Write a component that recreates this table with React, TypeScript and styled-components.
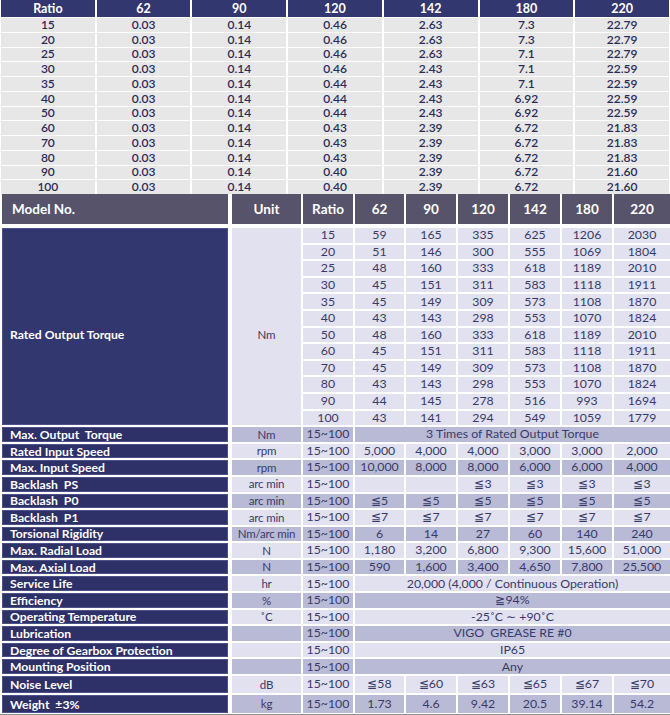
import React from "react";
import styled, { createGlobalStyle } from "styled-components";

const Global = createGlobalStyle`
  html, body { margin: 0; padding: 0; background: #ffffff; }
  body { font-family: "Lato", "Noto Sans", sans-serif; }
`;

const Page = styled.div`
  width: 670px;
  height: 715px;
  overflow: hidden;
  background: #fff;
`;

/* ---------- Top ratio table ---------- */
const TopGrid = styled.div`
  display: grid;
  grid-template-columns: repeat(7, 1fr);
  grid-template-rows: 17px repeat(12, 13.75px);
  column-gap: 2px;
  row-gap: 1px;
  padding: 0 1px;
`;

const TopHead = styled.div`
  background: #33376f;
  color: #fff;
  font-weight: 700;
  font-size: 12.5px;
  display: flex;
  align-items: center;
  justify-content: center;
`;

const TopCell = styled.div`
  background: #e7e7e7;
  color: #2a2c56;
  font-size: 12px;
  font-weight: 600;
  display: flex;
  align-items: center;
  justify-content: center;
  line-height: 1;
`;

/* ---------- Spec table ---------- */
const COLS = "228px 69px 50px 49px 50px 50px 50px 50px 56px";

const HeadGrid = styled.div`
  display: grid;
  grid-template-columns: ${COLS};
  column-gap: 2px;
  height: 30px;
  padding-left: 2px;
`;

const HeadCell = styled.div<{ $left?: boolean }>`
  background: #57536a;
  color: #fff;
  font-weight: 700;
  font-size: 13.5px;
  display: flex;
  align-items: center;
  justify-content: ${(p) => (p.$left ? "flex-start" : "center")};
  padding-left: ${(p) => (p.$left ? "10px" : "0")};
  margin-right: ${(p) => (p.$left ? "2px" : "0")};
`;

const BodyGrid = styled.div`
  display: grid;
  grid-template-columns: ${COLS};
  grid-template-rows: repeat(27, 14.6px) 17px 18px;
  column-gap: 2px;
  row-gap: 2px;
  margin-top: 4px;
  padding-left: 2px;
  padding-bottom: 1px;
  border-bottom: 1px solid #8d8d96;
`;

const Label = styled.div<{ $span?: number; $block?: boolean }>`
  grid-column: 1;
  grid-row: ${(p) => (p.$span ? `span ${p.$span}` : "auto")};
  margin-right: 2px;
  background: ${(p) => (p.$block ? "#33376f" : "#2e3068")};
  box-shadow: inset 0 0 0 1px #4d5189;
  color: #fff;
  font-weight: 700;
  font-size: 12.2px;
  white-space: pre;
  display: flex;
  align-items: center;
  padding-left: 8px;
  padding-top: ${(p) => (p.$block ? "16px" : "0")};
`;

const Cell = styled.div<{ $dark?: boolean; $span?: number; $rows?: number; $top?: boolean }>`
  grid-column: ${(p) => (p.$span ? `span ${p.$span}` : "auto")};
  grid-row: ${(p) => (p.$rows ? `span ${p.$rows}` : "auto")};
  background: ${(p) => (p.$dark ? "#b9bad6" : "#e1e1ef")};
  color: #383a6a;
  font-size: 12.3px;
  white-space: pre;
  display: flex;
  align-items: center;
  justify-content: center;
  line-height: 1;
  padding-top: ${(p) => (p.$top ? "16px" : "0")};
`;

const UnitCell = styled(Cell)`
  font-size: 11.5px;
  letter-spacing: -0.2px;
`;

const topCols = ["Ratio", "62", "90", "120", "142", "180", "220"];
const topRows = [
  ["15", "0.03", "0.14", "0.46", "2.63", "7.3", "22.79"],
  ["20", "0.03", "0.14", "0.46", "2.63", "7.3", "22.79"],
  ["25", "0.03", "0.14", "0.46", "2.63", "7.1", "22.79"],
  ["30", "0.03", "0.14", "0.46", "2.43", "7.1", "22.59"],
  ["35", "0.03", "0.14", "0.44", "2.43", "7.1", "22.59"],
  ["40", "0.03", "0.14", "0.44", "2.43", "6.92", "22.59"],
  ["50", "0.03", "0.14", "0.44", "2.43", "6.92", "22.59"],
  ["60", "0.03", "0.14", "0.43", "2.39", "6.72", "21.83"],
  ["70", "0.03", "0.14", "0.43", "2.39", "6.72", "21.83"],
  ["80", "0.03", "0.14", "0.43", "2.39", "6.72", "21.83"],
  ["90", "0.03", "0.14", "0.40", "2.39", "6.72", "21.60"],
  ["100", "0.03", "0.14", "0.40", "2.39", "6.72", "21.60"],
];

const torque: [string, string[]][] = [
  ["15", ["59", "165", "335", "625", "1206", "2030"]],
  ["20", ["51", "146", "300", "555", "1069", "1804"]],
  ["25", ["48", "160", "333", "618", "1189", "2010"]],
  ["30", ["45", "151", "311", "583", "1118", "1911"]],
  ["35", ["45", "149", "309", "573", "1108", "1870"]],
  ["40", ["43", "143", "298", "553", "1070", "1824"]],
  ["50", ["48", "160", "333", "618", "1189", "2010"]],
  ["60", ["45", "151", "311", "583", "1118", "1911"]],
  ["70", ["45", "149", "309", "573", "1108", "1870"]],
  ["80", ["43", "143", "298", "553", "1070", "1824"]],
  ["90", ["44", "145", "278", "516", "993", "1694"]],
  ["100", ["43", "141", "294", "549", "1059", "1779"]],
];

type Spec = { label: string; unit: string; values: string[] | string };
const specs: Spec[] = [
  { label: "Max. Output  Torque", unit: "Nm", values: "3 Times of Rated Output Torque" },
  { label: "Rated Input Speed", unit: "rpm", values: ["5,000", "4,000", "4,000", "3,000", "3,000", "2,000"] },
  { label: "Max. Input Speed", unit: "rpm", values: ["10,000", "8,000", "8,000", "6,000", "6,000", "4,000"] },
  { label: "Backlash  PS", unit: "arc min", values: ["", "", "≦3", "≦3", "≦3", "≦3"] },
  { label: "Backlash  P0", unit: "arc min", values: ["≦5", "≦5", "≦5", "≦5", "≦5", "≦5"] },
  { label: "Backlash  P1", unit: "arc min", values: ["≦7", "≦7", "≦7", "≦7", "≦7", "≦7"] },
  { label: "Torsional Rigidity", unit: "Nm/arc min", values: ["6", "14", "27", "60", "140", "240"] },
  { label: "Max. Radial Load", unit: "N", values: ["1,180", "3,200", "6,800", "9,300", "15,600", "51,000"] },
  { label: "Max. Axial Load", unit: "N", values: ["590", "1,600", "3,400", "4,650", "7,800", "25,500"] },
  { label: "Service Life", unit: "hr", values: "20,000 (4,000 / Continuous Operation)" },
  { label: "Efficiency", unit: "%", values: "≧94%" },
  { label: "Operating Temperature", unit: "˚C", values: "-25˚C ∼ +90˚C" },
  { label: "Lubrication", unit: "", values: "VIGO  GREASE RE #0" },
  { label: "Degree of Gearbox Protection", unit: "", values: "IP65" },
  { label: "Mounting Position", unit: "", values: "Any" },
  { label: "Noise Level", unit: "dB", values: ["≦58", "≦60", "≦63", "≦65", "≦67", "≦70"] },
  { label: "Weight  ±3%", unit: "kg", values: ["1.73", "4.6", "9.42", "20.5", "39.14", "54.2"] },
];

const headCols = ["Unit", "Ratio", "62", "90", "120", "142", "180", "220"];

export default function App() {
  return (
    <Page>
      <Global />
      <TopGrid>
        {topCols.map((c) => (
          <TopHead key={c}>{c}</TopHead>
        ))}
        {topRows.map((r, i) =>
          r.map((v, j) => <TopCell key={`${i}-${j}`}>{v}</TopCell>)
        )}
      </TopGrid>

      <HeadGrid>
        <HeadCell $left>Model No.</HeadCell>
        {headCols.map((c) => (
          <HeadCell key={c}>{c}</HeadCell>
        ))}
      </HeadGrid>

      <BodyGrid>
        <Label $span={12} $block>
          Rated Output Torque
        </Label>
        <UnitCell $rows={12} $top>
          Nm
        </UnitCell>
        {torque.map(([ratio, vals]) => (
          <React.Fragment key={ratio}>
            <Cell>{ratio}</Cell>
            {vals.map((v, j) => (
              <Cell key={j}>{v}</Cell>
            ))}
          </React.Fragment>
        ))}

        {specs.map((s, i) => {
          const dark = i % 2 === 0;
          return (
            <React.Fragment key={s.label}>
              <Label>{s.label}</Label>
              <UnitCell $dark={dark}>{s.unit}</UnitCell>
              <Cell $dark={dark}>15~100</Cell>
              {typeof s.values === "string" ? (
                <Cell $dark={dark} $span={6}>
                  {s.values}
                </Cell>
              ) : (
                s.values.map((v, j) => (
                  <Cell key={j} $dark={dark}>
                    {v}
                  </Cell>
                ))
              )}
            </React.Fragment>
          );
        })}
      </BodyGrid>
    </Page>
  );
}
